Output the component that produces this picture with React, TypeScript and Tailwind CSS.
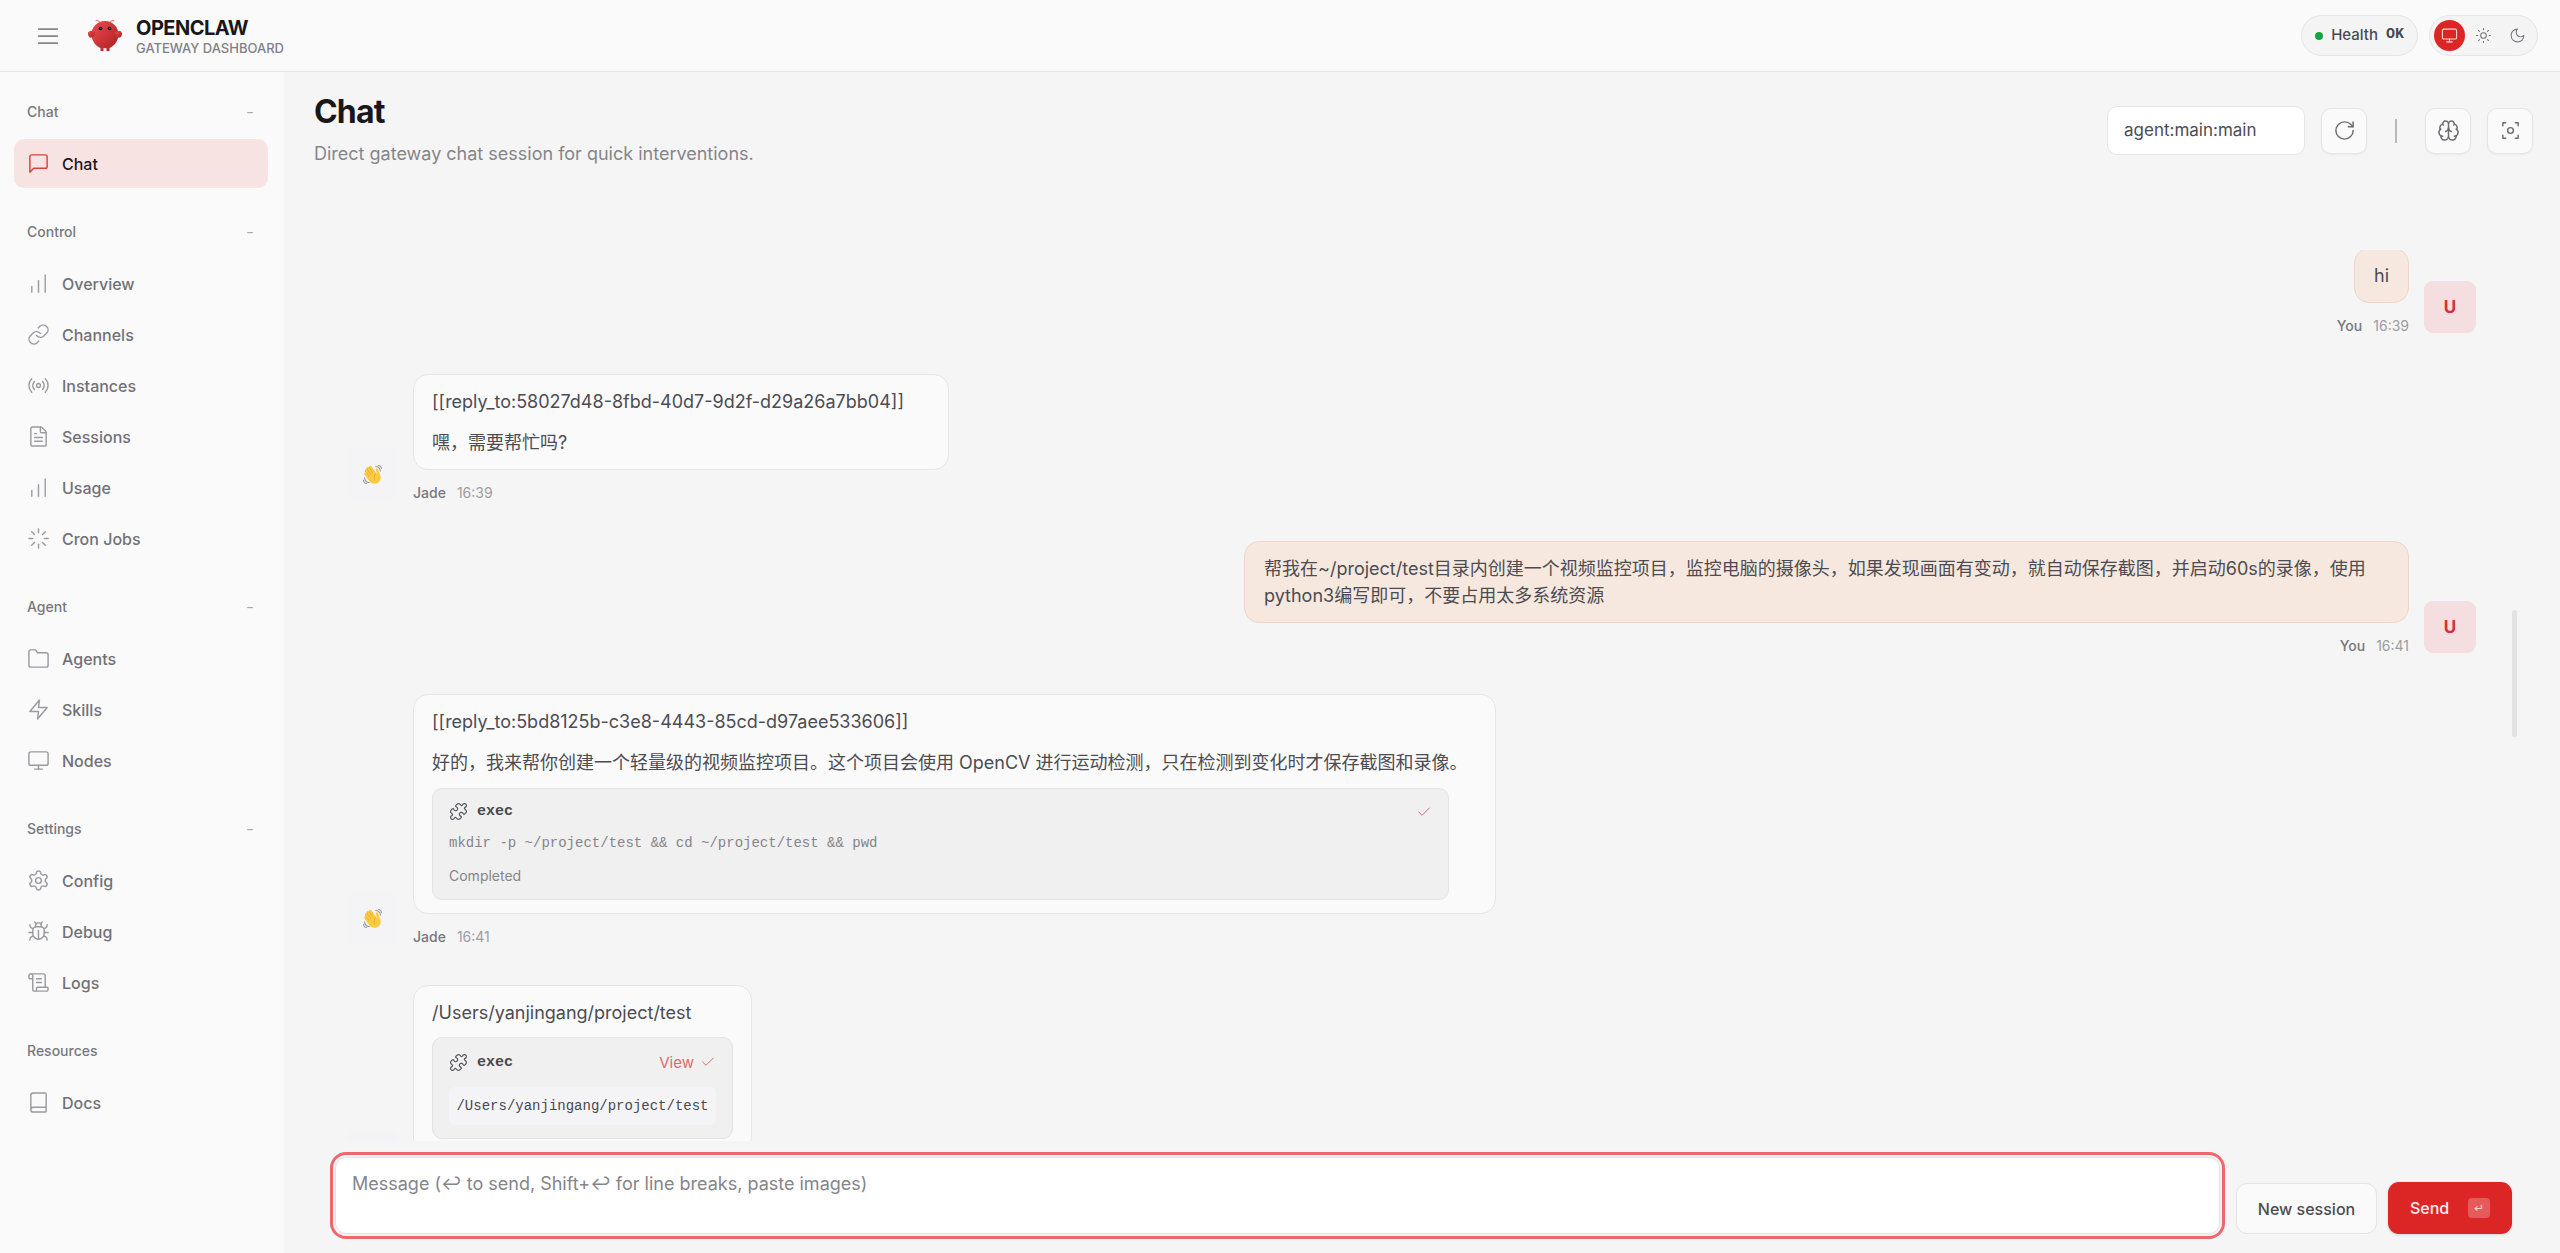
import type { ReactNode } from "react";
import {
  Book,
  Brain,
  Bug,
  ChartNoAxesColumnIncreasing,
  Check,
  FileText,
  Link,
  Loader,
  Monitor,
  RotateCw,
  ScrollText,
  Settings,
} from "lucide-react";

const icon = { size: 23, strokeWidth: 1.5 };

function Glyph({ size = 23, width = 1.5, children }: { size?: number; width?: number; children: ReactNode }) {
  return (
    <svg
      width={size}
      height={size}
      viewBox="0 0 24 24"
      fill="none"
      stroke="currentColor"
      strokeWidth={width}
      strokeLinecap="round"
      strokeLinejoin="round"
      aria-hidden="true"
    >
      {children}
    </svg>
  );
}

function Logo() {
  return (
    <svg width="36" height="36" viewBox="0 0 120 120" fill="none" aria-hidden="true">
      <defs>
        <linearGradient id="shell" x1="0%" y1="0%" x2="100%" y2="100%">
          <stop offset="0%" stopColor="#f04a4d" />
          <stop offset="100%" stopColor="#a81f22" />
        </linearGradient>
      </defs>
      <path
        d="M60 10C30 10 15 35 15 55C15 75 30 95 45 100L45 110L55 110L55 100C55 100 60 102 65 100L65 110L75 110L75 100C90 95 105 75 105 55C105 35 90 10 60 10Z"
        fill="url(#shell)"
      />
      <path d="M20 45C5 40 0 50 5 60C10 70 20 65 25 55C28 48 25 45 20 45Z" fill="url(#shell)" />
      <path d="M100 45C115 40 120 50 115 60C110 70 100 65 95 55C92 48 95 45 100 45Z" fill="url(#shell)" />
      <path d="M45 15Q35 5 30 8M75 15Q85 5 90 8" stroke="#e0595b" strokeWidth="3" strokeLinecap="round" />
      <circle cx="45" cy="35" r="6" fill="#0a1014" />
      <circle cx="75" cy="35" r="6" fill="#0a1014" />
      <circle cx="46" cy="34" r="2" fill="#3aa596" />
      <circle cx="76" cy="34" r="2" fill="#3aa596" />
    </svg>
  );
}

type Item = { label: string; icon: ReactNode; active?: boolean };

const groups: { title: string; collapsible: boolean; items: Item[] }[] = [
  {
    title: "Chat",
    collapsible: true,
    items: [
      {
        label: "Chat",
        active: true,
        icon: (
          <Glyph>
            <path d="M21 15a2 2 0 0 1-2 2H7l-4 4V5a2 2 0 0 1 2-2h14a2 2 0 0 1 2 2z" />
          </Glyph>
        ),
      },
    ],
  },
  {
    title: "Control",
    collapsible: true,
    items: [
      { label: "Overview", icon: <ChartNoAxesColumnIncreasing {...icon} /> },
      { label: "Channels", icon: <Link {...icon} /> },
      {
        label: "Instances",
        icon: (
          <Glyph>
            <circle cx="12" cy="12" r="2" />
            <path d="M16.24 7.76a6 6 0 0 1 0 8.49M7.76 16.24a6 6 0 0 1 0-8.49M19.07 4.93a10 10 0 0 1 0 14.14M4.93 19.07a10 10 0 0 1 0-14.14" />
          </Glyph>
        ),
      },
      { label: "Sessions", icon: <FileText {...icon} /> },
      { label: "Usage", icon: <ChartNoAxesColumnIncreasing {...icon} /> },
      { label: "Cron Jobs", icon: <Loader {...icon} /> },
    ],
  },
  {
    title: "Agent",
    collapsible: true,
    items: [
      {
        label: "Agents",
        icon: (
          <Glyph>
            <path d="M22 19a2 2 0 0 1-2 2H4a2 2 0 0 1-2-2V5a2 2 0 0 1 2-2h5l2 3h9a2 2 0 0 1 2 2z" />
          </Glyph>
        ),
      },
      {
        label: "Skills",
        icon: (
          <Glyph>
            <path d="M13 2 3 14h9l-1 8 10-12h-9l1-8z" />
          </Glyph>
        ),
      },
      { label: "Nodes", icon: <Monitor {...icon} /> },
    ],
  },
  {
    title: "Settings",
    collapsible: true,
    items: [
      { label: "Config", icon: <Settings {...icon} /> },
      { label: "Debug", icon: <Bug {...icon} /> },
      { label: "Logs", icon: <ScrollText {...icon} /> },
    ],
  },
  {
    title: "Resources",
    collapsible: false,
    items: [{ label: "Docs", icon: <Book {...icon} /> }],
  },
];

function Header() {
  return (
    <header className="flex h-[72px] shrink-0 items-center border-b border-[#e4e4e5] bg-[#fafafa] pr-[22px] pl-[34px]">
      <button type="button" aria-label="Toggle sidebar" className="text-[#85858a]">
        <Glyph size={28}>
          <path d="M4 6h16M4 12h16M4 18h16" />
        </Glyph>
      </button>
      <div className="ml-[25px] flex items-center gap-[13px]">
        <Logo />
        <div className="pt-[2px]">
          <div className="text-[20px] leading-[22px] font-bold tracking-tight text-[#18181b]">OPENCLAW</div>
          <div className="text-[13px] leading-[18px] font-medium text-[#808086]">GATEWAY DASHBOARD</div>
        </div>
      </div>
      <div className="ml-auto flex items-center gap-[11px]">
        <div className="flex h-[41px] items-center gap-2 rounded-full border border-[#e5e5e8] bg-[#f4f4f5] px-[13px] text-[15px] font-medium text-[#4a4a50]">
          <span className="size-2 rounded-full bg-[#16a34a]" />
          <span>Health</span>
          <span className="font-['Liberation_Mono',monospace] text-[15px] font-bold">OK</span>
        </div>
        <div className="flex h-[41px] items-center gap-[3px] rounded-full border border-[#e5e5e8] bg-[#f4f4f5] px-1 text-[#77777d]">
          <button
            type="button"
            aria-label="System theme"
            className="flex size-[31px] items-center justify-center rounded-full bg-[#dc2626] text-[#fbdcdc]"
          >
            <Monitor size={17} strokeWidth={1.5} />
          </button>
          <button type="button" aria-label="Light theme" className="flex size-[31px] items-center justify-center">
            <Glyph size={17}>
              <circle cx="12" cy="12" r="4" />
              <path d="M12 2v2M12 20v2M4.93 4.93l1.41 1.41M17.66 17.66l1.41 1.41M2 12h2M20 12h2M6.34 17.66l-1.41 1.41M19.07 4.93l-1.41 1.41" />
            </Glyph>
          </button>
          <button type="button" aria-label="Dark theme" className="flex size-[31px] items-center justify-center">
            <Glyph size={17}>
              <path d="M12 3a6 6 0 0 0 9 9 9 9 0 1 1-9-9Z" />
            </Glyph>
          </button>
        </div>
      </div>
    </header>
  );
}

function Sidebar() {
  return (
    <nav className="flex w-[284px] shrink-0 flex-col gap-[25px] bg-[#fafafa] pt-[21px] pr-4 pl-[14px]">
      {groups.map((g) => (
        <section key={g.title}>
          <button
            type="button"
            className="mb-[9px] flex h-[37px] w-full items-center justify-between pr-[14px] pl-[13px] text-[14px] font-medium text-[#77777d]"
          >
            <span>{g.title}</span>
            {g.collapsible && <span className="text-[12px] text-[#a8a8ad]">−</span>}
          </button>
          <ul className="flex flex-col gap-[2px]">
            {g.items.map((it) => (
              <li key={it.label}>
                <a
                  href="#"
                  className={
                    it.active
                      ? "flex h-[49px] items-center gap-3 rounded-[10px] bg-[#f8e3e3] px-[13px] text-[16px] font-medium text-[#18181b]"
                      : "flex h-[49px] items-center gap-3 rounded-[10px] px-[13px] text-[16px] font-medium text-[#717177]"
                  }
                >
                  <span className={it.active ? "text-[#d94040]" : "text-[#9b9ba0]"}>{it.icon}</span>
                  {it.label}
                </a>
              </li>
            ))}
          </ul>
        </section>
      ))}
    </nav>
  );
}

function ToolButton({ label, children }: { label: string; children: ReactNode }) {
  return (
    <button
      type="button"
      aria-label={label}
      className="flex size-[46px] items-center justify-center rounded-[10px] border border-[#e5e5e6] bg-[#fafafa] text-[#6b6b70] shadow-xs"
    >
      {children}
    </button>
  );
}

function WavingHand() {
  return (
    <svg width="19" height="19" viewBox="0 0 36 36" aria-hidden="true">
      <path
        d="M4.861 9.147c.94-.657 2.357-.531 3.201.166l-.968-1.407c-.779-1.111-.5-2.313.612-3.093 1.112-.777 4.263 1.312 4.263 1.312-.786-1.122-.639-2.544.483-3.331 1.122-.784 2.68-.51 3.464.612l10.185 14.554L25 31l-13.366-5.192L4.2 12.6c-.7-1.100-.4-2.700.661-3.453z"
        fill="#e5a02c"
      />
      <path
        d="M2.695 17.336s-1.132-1.65.519-2.781c1.649-1.131 2.78.518 2.78.518l5.251 7.658c.181-.302.379-.6.6-.894L4.557 11.21s-1.131-1.649.519-2.78c1.649-1.131 2.78.518 2.78.518l6.855 9.997c.255-.208.516-.417.785-.622L7.549 6.732s-1.131-1.649.519-2.78c1.649-1.131 2.78.518 2.78.518l7.947 11.589c.292-.179.581-.334.871-.498L12.238 4.729s-1.131-1.649.518-2.78c1.649-1.131 2.78.518 2.78.518l7.854 11.454 1.194 1.742c-4.948 3.394-5.419 9.779-2.592 13.902.565.825 1.39.26 1.39.26-3.393-4.949-2.357-10.51 2.592-13.903L24.515 8.62s-.545-1.924 1.378-2.47c1.924-.545 2.47 1.379 2.47 1.379l1.685 5.004c.668 1.984 1.379 3.961 2.32 5.831 2.657 5.28 1.07 11.842-3.94 15.279-5.465 3.747-12.936 2.354-16.684-3.11L2.695 17.336z"
        fill="#fbca3e"
      />
      <path
        d="M12 32.042C8 32.042 3.958 28 3.958 24c0-.553-.405-1-.958-1s-1.042.447-1.042 1C1.958 30 6 34.042 12 34.042c.553 0 1-.489 1-1.042s-.447-.958-1-.958zM7 34c-3 0-5-2-5-5 0-.553-.447-1-1-1s-1 .447-1 1c0 4 3 7 7 7 .553 0 1-.447 1-1s-.447-1-1-1zM24 2c-.552 0-1 .448-1 1s.448 1 1 1c4 0 8 3.589 8 8 0 .552.448 1 1 1s1-.448 1-1c0-5.514-4-10-10-10zM29 .042c-.552 0-1 .406-1 .958s.448 1.042 1 1.042c3 0 4.958 2.225 4.958 4.958 0 .552.489 1 1.042 1s.958-.448.958-1C35.958 3.163 33 .042 29 .042z"
        fill="#9a9aa3"
      />
    </svg>
  );
}

function Group({ from, time, children }: { from: "You" | "Jade"; time?: string; children: ReactNode }) {
  const mine = from === "You";
  return (
    <article className={mine ? "flex flex-row-reverse items-end gap-[15px]" : "flex items-end gap-[15px]"}>
      <div
        className={
          mine
            ? "flex size-[52px] shrink-0 items-center justify-center rounded-[9px] bg-[#f4dedf] text-[17px] font-bold text-[#cf3438]"
            : "flex size-[52px] shrink-0 items-center justify-center rounded-[9px] bg-[#f4f4f6]"
        }
      >
        {mine ? "U" : <WavingHand />}
      </div>
      <div className={mine ? "flex min-w-0 flex-col items-end pb-0" : "flex min-w-0 flex-col items-start"}>
        {children}
        <div className="mt-4 flex h-[14px] gap-[11px] text-[14px] leading-[14px] whitespace-nowrap text-[#9d9da3]">
          {time && (
            <>
              <span className="font-medium text-[#77777d]">{from}</span>
              <time>{time}</time>
            </>
          )}
        </div>
      </div>
    </article>
  );
}

const reply = "max-w-full rounded-[15px] border border-[#e6e6e7] bg-[#fafafa] px-[18px] py-[13px]";
const mineBubble = "max-w-full rounded-[15px] border border-[#f0d5c8] bg-[#f6e8df] px-[19px] py-[13px]";
const card = "rounded-[10px] border border-[#e4e4e5] bg-[#f0f0f0] px-4 pt-3 pb-[13px]";

function CardHead({ tall, children }: { tall?: boolean; children: ReactNode }) {
  return (
    <div className={tall ? "flex h-6 items-center" : "flex h-[21px] items-center"}>
      <span className="text-[#55555b]">
        <Glyph size={19}>
          <path d="M19.439 7.85c-.049.322.059.648.289.878l1.568 1.568c.47.47.706 1.087.706 1.704s-.235 1.233-.706 1.704l-1.611 1.611a.98.98 0 0 1-.837.276c-.47-.07-.802-.48-.968-.925a2.501 2.501 0 1 0-3.214 3.214c.446.166.855.497.925.968a.979.979 0 0 1-.276.837l-1.61 1.61a2.404 2.404 0 0 1-1.705.707 2.402 2.402 0 0 1-1.704-.706l-1.568-1.568a1.026 1.026 0 0 0-.877-.29c-.493.074-.84.504-1.02.968a2.5 2.5 0 1 1-3.237-3.237c.464-.18.894-.527.967-1.02a1.026 1.026 0 0 0-.289-.877l-1.568-1.568A2.402 2.402 0 0 1 1.998 12c0-.617.236-1.234.706-1.704L4.23 8.77c.24-.24.581-.353.917-.303.515.076.874.54 1.02 1.02a2.5 2.5 0 1 0 3.237-3.237c-.48-.146-.944-.505-1.02-1.02a.98.98 0 0 1 .303-.917l1.526-1.526A2.402 2.402 0 0 1 11.998 2c.617 0 1.234.236 1.704.706l1.568 1.568c.23.23.556.338.877.29.493-.074.84-.504 1.02-.968a2.5 2.5 0 1 1 3.236 3.236c-.464.18-.894.527-.967 1.02Z" />
        </Glyph>
      </span>
      <span className="ml-[9px] font-['Liberation_Mono',monospace] text-[15px] font-bold text-[#48484e]">exec</span>
      <span className="ml-auto flex items-center gap-[6px] text-[#dd6a6c]">{children}</span>
    </div>
  );
}

function Thread() {
  return (
    <div className="relative mt-[74px] min-h-0 flex-1 overflow-hidden pr-[84px] pl-[62px]">
      <div className="-mt-[2px] flex flex-col gap-[41px] text-[18px] leading-[27px] text-[#4c4c52]">
        <Group from="You" time="16:39">
          <p className={mineBubble}>hi</p>
        </Group>

        <Group from="Jade" time="16:39">
          <div className={`${reply} w-[536px]`}>
            <p>[[reply_to:58027d48-8fbd-40d7-9d2f-d29a26a7bb04]]</p>
            <p className="mt-[14px]">嘿，需要帮忙吗?</p>
          </div>
        </Group>

        <Group from="You" time="16:41">
          <p className={`${mineBubble} w-[1165px]`}>
            帮我在~/project/test目录内创建一个视频监控项目，监控电脑的摄像头，如果发现画面有变动，就自动保存截图，并启动60s的录像，使用python3编写即可，不要占用太多系统资源
          </p>
        </Group>

        <Group from="Jade" time="16:41">
          <div className={`${reply} w-[1083px]`}>
            <p>[[reply_to:5bd8125b-c3e8-4443-85cd-d97aee533606]]</p>
            <p className="mt-[14px]">
              好的，我来帮你创建一个轻量级的视频监控项目。这个项目会使用 OpenCV 进行运动检测，只在检测到变化时才保存截图和录像。
            </p>
            <div className={`${card} mt-3 mr-[28px]`}>
              <CardHead>
                <Check size={16} strokeWidth={1.5} />
              </CardHead>
              <div className="mt-[11px] font-['Liberation_Mono',monospace] text-[14px] leading-[21px] text-[#85858a]">
                mkdir -p ~/project/test &amp;&amp; cd ~/project/test &amp;&amp; pwd
              </div>
              <div className="mt-[11px] text-[14px] leading-[21px] text-[#85858a]">Completed</div>
            </div>
          </div>
        </Group>

        <Group from="Jade">
          <div className={`${reply} w-[339px]`}>
            <p>/Users/yanjingang/project/test</p>
            <div className={`${card} mt-[11px]`}>
              <CardHead tall>
                <button type="button" className="text-[15px]">
                  View
                </button>
                <Check size={16} strokeWidth={1.5} />
              </CardHead>
              <div className="mt-[13px] flex h-[38px] items-center justify-center rounded-[6px] bg-[#f4f4f6] font-['Liberation_Mono',monospace] text-[14px] text-[#48484e]">
                /Users/yanjingang/project/test
              </div>
            </div>
          </div>
        </Group>
      </div>
      <div className="absolute top-[360px] right-[43px] h-[127px] w-[5px] rounded-full bg-[#e2e2e5]" />
    </div>
  );
}

function Composer() {
  return (
    <form className="mt-4 mr-12 mb-[19px] ml-[51px] flex shrink-0 items-end">
      <textarea
        aria-label="Message"
        placeholder="Message (↩ to send, Shift+↩ for line breaks, paste images)"
        className="h-[77px] min-w-0 flex-1 resize-none rounded-[11px] border border-[#e2e2e4] bg-white px-4 py-3 text-[18px] leading-[27px] text-[#3f3f46] shadow-[0_0_0_2px_#f7f1f1,0_0_0_5px_#ec686c] outline-none placeholder:text-[#85858a]"
      />
      <button
        type="button"
        className="ml-4 h-[51px] w-[141px] rounded-[11px] border border-[#e4e4e5] bg-[#fafafa] text-[16px] font-medium text-[#4c4c52]"
      >
        New session
      </button>
      <button
        type="submit"
        className="ml-[11px] flex h-[52px] w-[124px] items-center justify-between rounded-[11px] bg-[#dc2626] px-[22px] text-[16px] font-medium text-[#fdeeee] shadow-sm"
      >
        Send
        <kbd className="flex h-[20px] w-[22px] items-center justify-center rounded-[4px] bg-[#e55a5a] font-['DejaVu_Sans',sans-serif] text-[12px] leading-none text-[#fbd5d5]">
          ↵
        </kbd>
      </button>
    </form>
  );
}

export default function App() {
  return (
    <div className="flex h-screen flex-col overflow-hidden bg-[#f5f5f5] font-[Inter,'Noto_Sans_CJK_SC',sans-serif]">
      <Header />
      <div className="flex min-h-0 flex-1">
        <Sidebar />
        <main className="flex min-w-0 flex-1 flex-col">
          <div className="flex h-[104px] shrink-0 items-start justify-between pr-[27px] pl-[30px]">
            <div className="pt-5">
              <h1 className="text-[32px] leading-[40px] font-bold tracking-tight text-[#18181b]">Chat</h1>
              <p className="mt-2 text-[18px] leading-[27px] text-[#85858a]">
                Direct gateway chat session for quick interventions.
              </p>
            </div>
            <div className="flex items-center gap-4 pt-[34px]">
              <select
                aria-label="Session"
                className="h-[49px] w-[198px] appearance-none rounded-[10px] border border-[#e5e5e6] bg-white px-4 text-[17px] text-[#4c4c52]"
              >
                <option>agent:main:main</option>
              </select>
              <ToolButton label="Refresh">
                <RotateCw size={23} strokeWidth={1.5} />
              </ToolButton>
              <span className="mx-3 h-6 w-[2px] bg-[#b9b9bc]" />
              <ToolButton label="Toggle thinking">
                <Brain size={23} strokeWidth={1.5} />
              </ToolButton>
              <ToolButton label="Focus mode">
                <Glyph>
                  <circle cx="12" cy="12" r="3" />
                  <path d="M4 7V4h3M20 7V4h-3M4 17v3h3M20 17v3h-3" />
                </Glyph>
              </ToolButton>
            </div>
          </div>
          <Thread />
          <Composer />
        </main>
      </div>
    </div>
  );
}
